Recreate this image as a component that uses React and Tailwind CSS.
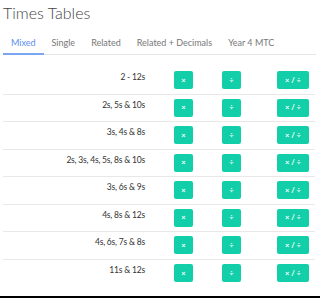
const rows = [
  "2 - 12s",
  "2s, 5s & 10s",
  "3s, 4s & 8s",
  "2s, 3s, 4s, 5s, 8s & 10s",
  "3s, 6s & 9s",
  "4s, 8s & 12s",
  "4s, 6s, 7s & 8s",
  "11s & 12s",
]

const tabs = ["Mixed", "Single", "Related", "Related + Decimals", "Year 4 MTC"]

const OpButton = ({ children, className }) => (
  <button
    className={`h-[18px] rounded-[2px] bg-[#12cfaa] text-white text-[7.5px] font-bold flex items-center justify-center ${className}`}
  >
    {children}
  </button>
)

export default function App() {
  return (
    <div className="w-[320px] h-[299px] bg-white overflow-hidden flex flex-col" style={{ fontFamily: "Lato, 'Noto Sans', sans-serif" }}>
      <h1 className="pl-[3px] pt-[1px] text-[16px] leading-[24px] font-light text-[#444]">Times Tables</h1>

      {/* tabs */}
      <div className="mt-[11px] mx-[3px] w-[313px] flex border-b border-[#e6e6e6] text-[9px]">
        {tabs.map((t, i) => (
          <div
            key={t}
            className={`px-[8px] pb-[3.5px] -mb-px ${i === 0 ? "text-[#5b8def] border-b-2 border-[#7aa5f0]" : "text-[#777]"}`}
          >
            {t}
          </div>
        ))}
      </div>

      {/* table */}
      <div className="mt-[12px] mx-[3px] w-[312px] divide-y divide-[#e8e8e8]">
        {rows.map((r) => (
          <div key={r} className="h-[27.5px] flex items-center">
            <div className="w-[142px] text-right text-[8.5px] tracking-[-0.2px] text-[#333] -mt-[5px]">{r}</div>
            <OpButton className="ml-[29px] w-[19px]">×</OpButton>
            <OpButton className="ml-[29px] w-[19px]">÷</OpButton>
            <OpButton className="ml-[36px] w-[32px]">× / ÷</OpButton>
          </div>
        ))}
      </div>

      <div className="mt-auto mb-[1px] h-[2px] bg-black" />
    </div>
  )
}
